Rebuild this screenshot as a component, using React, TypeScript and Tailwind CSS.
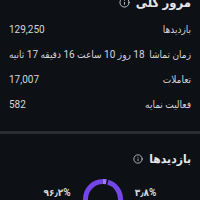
import { Info } from 'lucide-react'

const rows = [
  { label: 'بازدیدها', value: '129,250' },
  { label: 'زمان تماشا', value: '18 روز 10 ساعت 16 دقیقه 17 ثانیه' },
  { label: 'تعاملات', value: '17,007' },
  { label: 'فعالیت نمایه', value: '582' },
]

function Donut() {
  const r = 17.5
  const c = 2 * Math.PI * r
  const small = c * 0.038
  return (
    <svg width="42" height="42" viewBox="0 0 42 42" className="-rotate-90">
      <circle cx="21" cy="21" r={r} fill="none" stroke="#7445e8" strokeWidth="5" strokeDasharray={`${c - small - 1.6} ${c}`} strokeDashoffset={-small - 0.8} />
      <circle cx="21" cy="21" r={r} fill="none" stroke="#9d7bf5" strokeWidth="5" strokeDasharray={`${small - 0.8} ${c}`} strokeDashoffset={0} />
    </svg>
  )
}

export default function App() {
  return (
    <div
      dir="rtl"
      className="w-[200px] h-[200px] overflow-hidden bg-[#0d1015] text-[#d4d6da]"
      style={{ fontFamily: 'Roboto, "DejaVu Sans Condensed", "DejaVu Sans", sans-serif' }}
    >
      <div className="-mt-[8px] px-[9px]">
        <div className="flex items-center gap-1.5 h-[20px] leading-none">
          <span className="text-[13px] font-bold text-[#e6e7ea]">مرور کلی</span>
          <Info className="w-[11px] h-[11px] text-[#c9cbd0]" strokeWidth={2} />
        </div>
        <div className="flex flex-col mt-[5px]">
          {rows.map((row) => (
            <div key={row.label} className="flex items-center justify-between h-[25px] shrink-0 leading-none whitespace-nowrap text-[10px]">
              <span>{row.label}</span>
              <span className="text-[10px]">{row.value}</span>
            </div>
          ))}
        </div>
      </div>
      <div className="mt-[14px] h-[3px] bg-[#2a2d32]" />
      <div className="px-[9px] pt-[18px]">
        <div className="flex items-center gap-1.5 h-[14px] leading-none">
          <span className="text-[12px] font-bold text-[#e6e7ea]">بازدیدها</span>
          <Info className="w-[10px] h-[10px] text-[#c9cbd0]" strokeWidth={2} />
        </div>
        <div className="flex items-start justify-center gap-[11px] mt-[12px]">
          <span className="text-[10px] font-bold leading-none mt-[10px]">۳٫۸%</span>
          <Donut />
          <span className="text-[10px] font-bold leading-none mt-[10px]">۹۶٫۲%</span>
        </div>
      </div>
    </div>
  )
}
